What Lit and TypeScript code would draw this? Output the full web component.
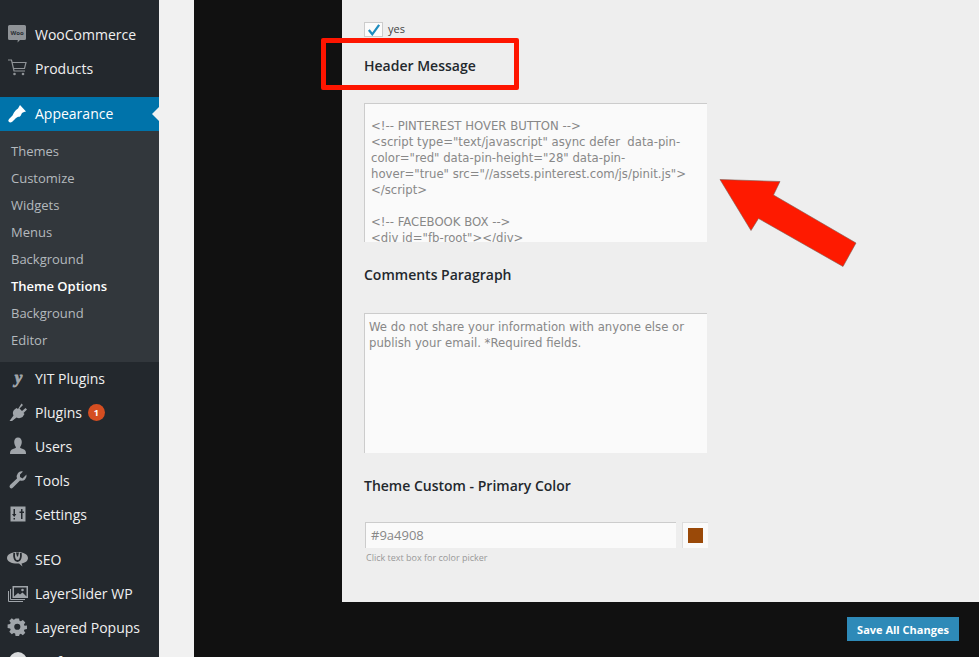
import { LitElement, html, css, svg } from "lit";
import { customElement } from "lit/decorators.js";

const ic = (body: unknown) => html`<svg class="ic" viewBox="0 0 20 20" width="20" height="20">${body}</svg>`;

const icons: Record<string, unknown> = {
  woo: ic(svg`<path fill="#8f9397" d="M1.500 1h15q1.500 0 1.500 1.500v12q0 1.500-1.500 1.500H12l-2.500 2.500.3-2.500H1.500Q0 16 0 14.500v-12Q0 1 1.500 1z"/><text x="9" y="11" font-size="6" font-weight="700" text-anchor="middle" font-family="Open Sans" fill="#2b3035">Woo</text>`),
  cart: ic(svg`<path fill="none" stroke="#8f9397" stroke-width="1.200" d="M0 2h3.500l2.500 11h11M4 4.500h14l-1.500 6H5.300"/><circle cx="6.500" cy="16" r="1.300" fill="#8f9397"/><circle cx="15" cy="16" r="1.300" fill="#8f9397"/>`),
  brush: ic(svg`<path fill="#fff" d="M12 2l6 6.500-2 .5-2 1-1.500 3-1.500 1-5-4.500 2-2.500 2-1.500zM6 9.500l4.500 4-2.500 1.500-3.500 3.500q-2 1.500-3.500.5t0-3l3.500-3.500z"/>`),
  y: ic(svg`<text x="10.500" y="15" font-size="17" font-weight="700" font-style="italic" text-anchor="middle" font-family="Liberation Serif" fill="#a0a5aa" stroke="#a0a5aa" stroke-width=".8">y</text>`),
  plug: ic(svg`<path fill="#a0a5aa" d="M13.500 1.500l1.500 1.500-3.500 3.500 2.500 2.500 3.500-3 1.500 1.500-3.500 3.500 1 1-2 3q-3 2-6 .5L4 19H1.500l4-5.500q-1.500-3 .5-5.500l2.500-2 1.500 1z"/>`),
  user: ic(svg`<path fill="#a0a5aa" d="M10 1.500c2.400 0 3.800 2 3.800 4.500s-1.300 4.500-1.800 5.200c0 1 2.700 1.300 4.500 2.600 1 .7 1.500 2 1.500 4.200H2c0-2.200.5-3.500 1.500-4.200C5.300 12.500 8 12.200 8 11.200 7.500 10.500 6.200 8.500 6.200 6s1.400-4.500 3.800-4.500z"/>`),
  wrench: ic(svg`<path fill="#a0a5aa" d="M18.500 4.500q.5 3-1.500 5t-5 1L5 17.500q-1.500 1.500-2.800.5t-.2-3l7-6.500q-1-3 1-5.500t5-1.500l-3 3v2.500l2.500 1.500z"/>`),
  sliders: ic(svg`<path fill="#a0a5aa" fill-rule="evenodd" d="M2.500 2.500h15v15h-15zM5.500 5v5H4l2.200 3 2.200-3H7V5zM13 5v2.500h-1.500V9H13v6h1.500V9H16V7.500h-1.500V5zM5.500 14v1.500H7V14z"/>`),
  seo: ic(svg`<path fill="#a5a8ab" d="M-1 9c0-3.500 4.500-6 10.500-6S20 5.500 20 9c0 3-3 5-6.500 5.500l1 3-3.500-3C4 15-1 12.500-1 9z"/><path fill="none" stroke="#23282d" stroke-width="1.800" d="M6.200 4c-.4 3 0 8 3.300 8s3.700-5 3.300-8"/><path fill="#23282d" d="M8 3.500h3L10 7.500H9z"/>`),
  layers: ic(svg`<path fill="none" stroke="#a0a5aa" d="M.500 8v10.500H15M2.500 6v10.500H17"/><path fill="#a0a5aa" d="M4.500 3H20v12H4.500z"/><path fill="#23282d" d="M6 4.500h12.500v9l-4-4-2.500 2-2-1.500-4 3.500z"/><circle cx="14.500" cy="7" r="1.300" fill="#a0a5aa"/>`),
  gear: ic(svg`<path fill="#a0a5aa" fill-rule="evenodd" d="M8 1h4l.5 2.700 1.500.7 2.300-1.600 2.800 2.800-1.600 2.300.7 1.500L21 9v4l-2.800.5-.7 1.500 1.600 2.300-2.800 2.800-2.300-1.600-1.500.7L12 21H8l-.5-2.800-1.500-.7-2.300 1.600-2.800-2.800 1.600-2.300-.7-1.500L-1 12V8l2.800-.5.700-1.500L.9 3.700l2.800-2.800L6 2.500l1.500-.7zM10 7a3.500 3.500 0 100 7 3.500 3.500 0 000-7z" transform="translate(.5 .5) scale(.88)"/>`),
  perf: ic(svg`<circle cx="10" cy="10" r="9" fill="#d8dadc"/>`),
};

type Row = { label: string; icon: string; badge?: string };
const groupA: Row[] = [
  { label: "WooCommerce", icon: "woo" },
  { label: "Products", icon: "cart" },
];
const subs = ["Themes", "Customize", "Widgets", "Menus", "Background", "Theme Options", "Background", "Editor"];
const groupB: Row[] = [
  { label: "YIT Plugins", icon: "y" },
  { label: "Plugins", icon: "plug", badge: "1" },
  { label: "Users", icon: "user" },
  { label: "Tools", icon: "wrench" },
  { label: "Settings", icon: "sliders" },
];
const groupC: Row[] = [
  { label: "SEO", icon: "seo" },
  { label: "LayerSlider WP", icon: "layers" },
  { label: "Layered Popups", icon: "gear" },
  { label: "Perfmatters", icon: "perf" },
];

const headerCode = `<!-- PINTEREST HOVER BUTTON -->
<script type="text/javascript" async defer  data-pin-
color="red" data-pin-height="28" data-pin-
hover="true" src="//assets.pinterest.com/js/pinit.js">
</script>

<!-- FACEBOOK BOX -->
<div id="fb-root"></div>`;

const commentsText = `We do not share your information with anyone else or
publish your email. *Required fields.`;

@customElement("app-root")
export class AppRoot extends LitElement {
  static styles = css`
    :host {
      display: flex;
      height: 657px;
      width: 979px;
      overflow: hidden;
      position: relative;
      font-family: "Open Sans", sans-serif;
      background: #111;
    }
    .side {
      width: 159px;
      height: 657px;
      flex: none;
      background: #23282d;
      padding-top: 17px;
      box-sizing: border-box;
      overflow: hidden;
    }
    .row {
      height: 34px;
      display: flex;
      align-items: center;
      color: #f0f0f0;
      font-size: 14px;
      padding-left: 8px;
      box-sizing: border-box;
      position: relative;
      white-space: nowrap;
    }
    .up { padding-bottom: 2px; }
    .ic { flex: none; display: block; overflow: visible; }
    .lbl { margin-left: 7px; }
    .badge {
      width: 17px;
      height: 17px;
      border-radius: 50%;
      background: #d54e21;
      color: #fff;
      font-size: 9px;
      font-weight: 700;
      display: flex;
      align-items: center;
      justify-content: center;
      margin-left: 6px;
    }
    .sep-l { margin-top: 12px; }
    .sep-s { margin-top: 10px; }
    .active {
      background: #0073aa;
      color: #fff;
    }
    .active::after {
      content: "";
      position: absolute;
      right: 0;
      top: 10px;
      border: 7px solid transparent;
      border-left-width: 0;
      border-right-color: #f1f1f1;
    }
    .subs {
      background: #32373c;
      padding: 6px 0 9px;
    }
    .sub {
      height: 27px;
      display: flex;
      align-items: center;
      padding-left: 11px;
      color: #b4b9be;
      font-size: 13px;
    }
    .sub.cur { color: #fff; font-weight: 600; }
    .strip { width: 35px; flex: none; background: #f1f1f1; }
    .mid { width: 148px; flex: none; background: #111; }
    .right { flex: 1; min-width: 0; display: flex; flex-direction: column; }
    .panel {
      height: 602px;
      flex: none;
      box-sizing: border-box;
      background: #eee;
      padding: 22px 22px 0;
    }
    .yes {
      display: flex;
      align-items: flex-start;
      gap: 5px;
      height: 16px;
      font-size: 11px;
      line-height: 13px;
      color: #444;
    }
    .check {
      width: 19px;
      height: 15px;
      box-sizing: border-box;
      background: #fbfbfb;
      border: 1px solid #ccc;
      display: flex;
      align-items: center;
      justify-content: center;
    }
    h3 {
      margin: 0;
      font-size: 14px;
      line-height: 20px;
      font-weight: 600;
      color: #23282d;
    }
    .h1 { margin-top: 18px; }
    .area {
      width: 343px;
      height: 139px;
      box-sizing: border-box;
      background: #fafafa;
      border-top: 1px solid #ccc;
      border-left: 1px solid #ccc;
      color: #888;
      font-family: "DejaVu Sans", sans-serif;
      font-size: 11.7px;
      line-height: 16px;
      white-space: pre;
      overflow: hidden;
    }
    .a1 { margin-top: 27px; padding: 14px 0 0 6px; }
    .h2 { margin-top: 23px; }
    .a2 { margin-top: 28px; height: 140px; padding: 5px 0 0 4px; }
    .h3b { margin-top: 23px; }
    .color { display: flex; gap: 6px; margin: 26px 0 0 1px; }
    .input {
      width: 311px;
      height: 26px;
      box-sizing: border-box;
      background: #fafafa;
      border-top: 1px solid #ccc;
      border-left: 1px solid #ccc;
      color: #888;
      font-size: 13px;
      line-height: 25px;
      padding-left: 5px;
    }
    .swatch {
      width: 26px;
      height: 26px;
      box-sizing: border-box;
      background: #fafafa;
      border-top: 1px solid #ddd;
      border-left: 1px solid #ddd;
      padding: 5px 0 0 5px;
    }
    .swatch i { display: block; width: 15px; height: 15px; background: #9a4908; }
    .hint { font-size: 9px; color: #999; margin: 3px 0 0 2px; line-height: 13px; }
    .foot { flex: 1; display: flex; justify-content: flex-end; align-items: flex-start; padding: 15px 20px 0 0; }
    .save {
      width: 112px;
      height: 24px;
      background: #2e8ab8;
      color: #fff;
      font-size: 11px;
      font-weight: 700;
      display: flex;
      align-items: center;
      justify-content: center;
    }
    .mark {
      position: absolute;
      left: 321px;
      top: 38px;
      width: 198px;
      height: 52px;
      box-sizing: border-box;
      border: 5px solid #fe1500;
      border-radius: 2px;
    }
    .arrow { position: absolute; left: 700px; top: 160px; }
  `;

  private row(r: Row, cls = "") {
    return html`<div class="row ${cls}">
      ${icons[r.icon]}<span class="lbl">${r.label}</span>
      ${r.badge ? html`<span class="badge">${r.badge}</span>` : ""}
    </div>`;
  }

  render() {
    return html`
      <nav class="side">
        ${groupA.map((r) => this.row(r))}
        ${this.row({ label: "Appearance", icon: "brush" }, "active sep-l up")}
        <div class="subs">
          ${subs.map((s) => html`<div class="sub ${s === "Theme Options" ? "cur" : ""}">${s}</div>`)}
        </div>
        ${groupB.map((r) => this.row(r, "up"))}
        ${groupC.map((r, i) => this.row(r, i === 0 ? "sep-s" : ""))}
      </nav>
      <div class="strip"></div>
      <div class="mid"></div>
      <div class="right">
        <section class="panel">
          <div class="yes">
            <span class="check">
              <svg viewBox="0 0 16 14" width="14" height="12"><path d="M2 7l4 5 8-11" fill="none" stroke="#1e8cbe" stroke-width="2.600"/></svg>
            </span>
            yes
          </div>
          <h3 class="h1">Header Message</h3>
          <div class="area a1">${headerCode}</div>
          <h3 class="h2">Comments Paragraph</h3>
          <div class="area a2">${commentsText}</div>
          <h3 class="h3b">Theme Custom - Primary Color</h3>
          <div class="color">
            <div class="input">#9a4908</div>
            <div class="swatch"><i></i></div>
          </div>
          <div class="hint">Click text box for color picker</div>
        </section>
        <div class="foot"><div class="save">Save All Changes</div></div>
      </div>
      <div class="mark"></div>
      <svg class="arrow" width="180" height="120" viewBox="0 0 180 120">
        <path d="M20 19.500L80 21.500 73.500 35 156 83 143 106.500 58.500 58.500 51 70.500z" fill="#fe1a00" stroke="#7a5a50" stroke-width=".6"/>
      </svg>
    `;
  }
}
